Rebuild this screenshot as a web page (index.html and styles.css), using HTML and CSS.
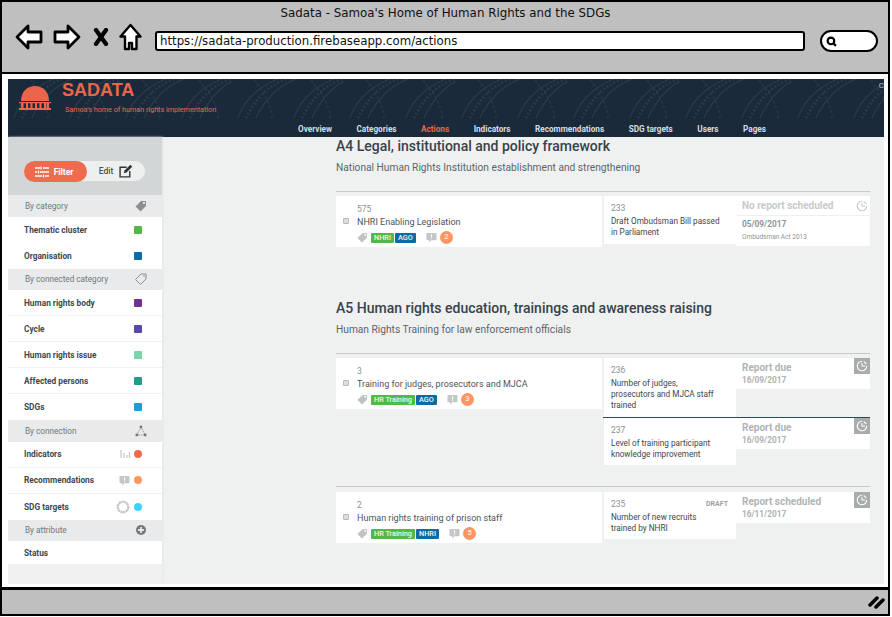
FILE: index.html
```html
<!DOCTYPE html>
<html lang="en">
<head>
    <meta charset="UTF-8">
    <meta name="viewport" content="width=device-width, initial-scale=1.0">
    <title>Sadata - Samoa's Home of Human Rights and the SDGs</title>
    <link rel="stylesheet" href="styles.css">
</head>
<body>
    <svg class="icon-defs" width="0" height="0">
        <symbol id="i-tag" viewBox="0 0 12 12"><path d="M6 1h5v5l-5.500 5.500L.5 6.500z" fill="currentColor"/><circle cx="9" cy="3" r="1" fill="#fff"/></symbol>
        <symbol id="i-tag-line" viewBox="0 0 12 12"><path d="M6 1h5v5l-5.500 5.500L.5 6.500z" fill="none" stroke="currentColor"/><circle cx="9" cy="3" r=".8" fill="currentColor"/></symbol>
        <symbol id="i-comment" viewBox="0 0 12 12"><path d="M1.500 1h9a1 1 0 0 1 1 1v6a1 1 0 0 1-1 1H6l-2.500 2.500V9h-2a1 1 0 0 1-1-1V2a1 1 0 0 1 1-1z" fill="currentColor"/><path d="M6 2.500v3.500M6 6.800v1" stroke="#fff" stroke-width="1.200"/></symbol>
        <symbol id="i-clock" viewBox="0 0 14 14"><path d="M7 1.500A5.500 5.500 0 1 0 12.500 7" fill="none" stroke="currentColor" stroke-width="1.300"/><path d="M7 3.500V7h3.500M9 1.700l3.200 3.200" fill="none" stroke="currentColor" stroke-width="1.200"/></symbol>
    </svg>

    <div class="window">
        <header class="chrome">
            <div class="chrome-title">Sadata - Samoa's Home of Human Rights and the SDGs</div>
            <div class="chrome-tools">
                <svg class="tool tool-arrow" viewBox="0 0 28 26"><path d="M13 2L2 13l11 11v-6h13V8H13z" fill="#fff" stroke="#000" stroke-width="2.800" stroke-linejoin="round"/></svg>
                <svg class="tool tool-arrow" viewBox="0 0 28 26"><path d="M15 2l11 11-11 11v-6H2V8h13z" fill="#fff" stroke="#000" stroke-width="2.800" stroke-linejoin="round"/></svg>
                <svg class="tool tool-x" viewBox="0 0 16 18"><path d="M3 2l10 14M13 2L3 16" stroke="#000" stroke-width="4.200" stroke-linecap="round"/></svg>
                <svg class="tool tool-home" viewBox="0 0 23 28"><path d="M11.500 2L1.500 13.500H6V26h4v-6h3v6h4.500V13.500H21.500z" fill="#fff" stroke="#000" stroke-width="2.400" stroke-linejoin="round"/></svg>
                <div class="url-box">https://sadata-production.firebaseapp.com/actions</div>
                <div class="search-box">
                    <svg class="search-glass" viewBox="0 0 10 10"><circle cx="4.500" cy="4.500" r="3" fill="none" stroke="#000" stroke-width="2"/><path d="M6.500 6.500L9 9" stroke="#000" stroke-width="2"/></svg>
                </div>
            </div>
        </header>

        <div class="viewport">
            <div class="app">
                <div class="app-header">
                    <div class="banner">
                        <svg class="banner-pattern" width="100%" height="100%">
                            <defs>
                                <pattern id="tatau" width="112" height="39" patternUnits="userSpaceOnUse">
                                    <path d="M6 39C12 22 26 8 46 0M24 39C32 22 44 8 64 0M62 39C68 22 82 8 102 0M80 39C88 22 100 8 112 2" fill="none" stroke="#2a3a4c" stroke-width="1.200"/>
                                    <path d="M14 39C22 22 34 8 54 0M70 39C78 22 90 8 110 0" fill="none" stroke="#2d3d50" stroke-width="2.500" stroke-dasharray="1.500 2.500"/>
                                    <path d="M40 39C40 26 30 12 22 0M98 39C98 26 88 12 78 0" fill="none" stroke="#263648" stroke-width="1.500" stroke-dasharray="3 2"/>
                                </pattern>
                            </defs>
                            <rect width="100%" height="100%" fill="url(#tatau)"/>
                        </svg>
                        <svg class="logo-mark" viewBox="0 0 32 26">
                            <path d="M2 16C2 6 9 1 16 1s14 5 14 15z" fill="#e8674c"/>
                            <path d="M0 17h32v1.200H0zM2 18h2.500v5H2zM7 18h2v5H7zM11.500 18h2v5h-2zM16 18h2v5h-2zM20.500 18h2v5h-2zM25 18h2v5h-2zM27.500 18H30v5h-2.500zM0 23h32v2H0z" fill="#e8674c"/>
                        </svg>
                        <div class="brand">
                            <div class="brand-name">SADATA</div>
                            <div class="brand-tag">Samoa's home of human rights implementation</div>
                        </div>
                        <span class="banner-cut">C</span>
                    </div>
                    <nav class="app-nav">
                        <a>Overview</a>
                        <a>Categories</a>
                        <a class="active">Actions</a>
                        <a>Indicators</a>
                        <a>Recommendations</a>
                        <a>SDG targets</a>
                        <a>Users</a>
                        <a>Pages</a>
                    </nav>
                </div>

                <div class="app-body">
                    <aside class="sidebar">
                        <div class="sidebar-top">
                            <div class="toggle">
                                <div class="toggle-on">
                                    <svg class="toggle-icon" viewBox="0 0 14 12"><path d="M0 2h5M8 2h6M0 6h2M5 6h9M0 10h7M10 10h4" stroke="#fff" stroke-width="1.300"/><path d="M6 .5v3M3.500 4.500v3M8.500 8.500v3" stroke="#fff" stroke-width="1.300"/></svg>
                                    Filter
                                </div>
                                <div class="toggle-off">
                                    Edit
                                    <svg class="edit-icon" viewBox="0 0 13 13"><path d="M10 6.500V12H1V3h6" fill="none" stroke="#333" stroke-width="1.300"/><path d="M4.500 8.500l.6-2.400L10.500.8l1.800 1.800L7 8z" fill="#333"/></svg>
                                </div>
                            </div>
                        </div>

                        <div class="side-head">By category <svg class="side-icon"><use href="#i-tag"/></svg></div>
                        <div class="side-row no-line">Thematic cluster <i class="swatch c-green"></i></div>
                        <div class="side-row no-line">Organisation <i class="swatch c-blue"></i></div>

                        <div class="side-head">By connected category <svg class="side-icon"><use href="#i-tag-line"/></svg></div>
                        <div class="side-row">Human rights body <i class="swatch c-purple"></i></div>
                        <div class="side-row">Cycle <i class="swatch c-indigo"></i></div>
                        <div class="side-row">Human rights issue <i class="swatch c-mint"></i></div>
                        <div class="side-row">Affected persons <i class="swatch c-teal"></i></div>
                        <div class="side-row no-line">SDGs <i class="swatch c-sky"></i></div>

                        <div class="side-head">By connection
                            <svg class="side-icon" viewBox="0 0 12 12"><path d="M6 2L2 10h8z" fill="none" stroke="#777" stroke-width=".8" stroke-dasharray="1.500 1"/><circle cx="6" cy="2" r="1.400" fill="#777"/><circle cx="1.800" cy="10" r="1.400" fill="#777"/><circle cx="10.200" cy="10" r="1.400" fill="#777"/></svg>
                        </div>
                        <div class="side-row">Indicators
                            <span class="side-extra">
                                <svg class="extra-icon" viewBox="0 0 10 10"><path d="M1 1v8M4 4v5M7 6v3M9.500 3v6" stroke="#c3c7c8" stroke-width="1.200"/></svg>
                                <i class="swatch round c-orange"></i>
                            </span>
                        </div>
                        <div class="side-row">Recommendations
                            <span class="side-extra">
                                <svg class="extra-icon comment-grey"><use href="#i-comment"/></svg>
                                <i class="swatch round c-peach"></i>
                            </span>
                        </div>
                        <div class="side-row no-line">SDG targets
                            <span class="side-extra">
                                <svg class="extra-icon ring" viewBox="0 0 12 12"><circle cx="6" cy="6" r="4.500" fill="none" stroke="#c3c7c8" stroke-width="2" stroke-dasharray="2 .4"/></svg>
                                <i class="swatch round c-cyan"></i>
                            </span>
                        </div>

                        <div class="side-head">By attribute
                            <svg class="side-icon" viewBox="0 0 12 12"><circle cx="6" cy="6" r="5" fill="#777"/><path d="M3 6h6M6 3v6" stroke="#fff" stroke-width="1.400"/></svg>
                        </div>
                        <div class="side-row no-line last">Status</div>
                    </aside>

                    <main class="content">
                        <section class="block">
                            <h2>A4 Legal, institutional and policy framework</h2>
                            <p class="block-sub">National Human Rights Institution establishment and strengthening</p>
                            <div class="action">
                                <div class="action-main">
                                    <i class="check"></i>
                                    <div class="action-id">575</div>
                                    <div class="action-title">NHRI Enabling Legislation</div>
                                    <div class="action-meta">
                                        <svg class="meta-tag"><use href="#i-tag"/></svg>
                                        <span class="tag tag-green">NHRI</span><span class="tag tag-blue">AGO</span>
                                        <svg class="meta-comment"><use href="#i-comment"/></svg>
                                        <span class="count">2</span>
                                    </div>
                                </div>
                                <div class="action-side">
                                    <div class="ind">
                                        <div class="ind-body h-233">
                                            <div class="ind-id">233</div>
                                            <div class="ind-text">Draft Ombudsman Bill passed in Parliament</div>
                                        </div>
                                        <div class="ind-report report-none">
                                            <div class="report-head">
                                                <span class="report-title">No report scheduled</span>
                                                <svg class="clock-plain"><use href="#i-clock"/></svg>
                                            </div>
                                            <div class="report-extra">
                                                <div class="report-date">05/09/2017</div>
                                                <div class="report-note">Ombudsman Act 2013</div>
                                            </div>
                                        </div>
                                    </div>
                                </div>
                            </div>
                        </section>

                        <section class="block block-a5">
                            <h2>A5 Human rights education, trainings and awareness raising</h2>
                            <p class="block-sub">Human Rights Training for law enforcement officials</p>
                            <div class="action">
                                <div class="action-main">
                                    <i class="check"></i>
                                    <div class="action-id">3</div>
                                    <div class="action-title">Training for judges, prosecutors and MJCA</div>
                                    <div class="action-meta">
                                        <svg class="meta-tag"><use href="#i-tag"/></svg>
                                        <span class="tag tag-green">HR Training</span><span class="tag tag-blue">AGO</span>
                                        <svg class="meta-comment"><use href="#i-comment"/></svg>
                                        <span class="count">3</span>
                                    </div>
                                </div>
                                <div class="action-side">
                                    <div class="ind">
                                        <div class="ind-body h-236">
                                            <div class="ind-id">236</div>
                                            <div class="ind-text">Number of judges, prosecutors and MJCA staff trained</div>
                                        </div>
                                        <div class="ind-report">
                                            <div class="report-title">Report due</div>
                                            <div class="report-date">16/09/2017</div>
                                            <span class="clock-box"><svg><use href="#i-clock"/></svg></span>
                                        </div>
                                    </div>
                                    <div class="ind ind-next">
                                        <div class="ind-body h-237">
                                            <div class="ind-id">237</div>
                                            <div class="ind-text">Level of training participant knowledge improvement</div>
                                        </div>
                                        <div class="ind-report">
                                            <div class="report-title">Report due</div>
                                            <div class="report-date">16/09/2017</div>
                                            <span class="clock-box"><svg><use href="#i-clock"/></svg></span>
                                        </div>
                                    </div>
                                </div>
                            </div>
                            <div class="action action-next">
                                <div class="action-main">
                                    <i class="check"></i>
                                    <div class="action-id">2</div>
                                    <div class="action-title">Human rights training of prison staff</div>
                                    <div class="action-meta">
                                        <svg class="meta-tag"><use href="#i-tag"/></svg>
                                        <span class="tag tag-green">HR Training</span><span class="tag tag-blue">NHRI</span>
                                        <svg class="meta-comment"><use href="#i-comment"/></svg>
                                        <span class="count">5</span>
                                    </div>
                                </div>
                                <div class="action-side">
                                    <div class="ind">
                                        <div class="ind-body h-235">
                                            <div class="ind-id">235 <span class="draft">DRAFT</span></div>
                                            <div class="ind-text">Number of new recruits trained by NHRI</div>
                                        </div>
                                        <div class="ind-report">
                                            <div class="report-title">Report scheduled</div>
                                            <div class="report-date">16/11/2017</div>
                                            <span class="clock-box"><svg><use href="#i-clock"/></svg></span>
                                        </div>
                                    </div>
                                </div>
                            </div>
                        </section>
                    </main>
                </div>
            </div>
        </div>

        <footer class="statusbar">
            <svg class="resize-grip" viewBox="0 0 18 14"><path d="M2 10L9 3M8 12l7-7" stroke="#000" stroke-width="3.500" stroke-linecap="round"/></svg>
        </footer>
    </div>
</body>
</html>
```

FILE: styles.css
```css
* {
    box-sizing: border-box;
}

body {
    margin: 0;
    background-color: #fff;
    font-family: Roboto, "Liberation Sans", sans-serif;
}

.icon-defs {
    position: absolute;
}

.window {
    width: 890px;
    height: 616px;
    display: flex;
    flex-direction: column;
    border: 2px solid #000;
    background-color: #fff;
}

/* browser chrome, sketch style */
.chrome {
    height: 72px;
    flex: none;
    background-color: #bfbfbf;
    border-bottom: 2px solid #000;
}

.chrome-title {
    height: 21px;
    padding: 4px 0 0 1px;
    text-align: center;
    font-family: "DejaVu Sans", sans-serif;
    font-size: 11.850px;
    line-height: 15px;
    color: #111;
}

.chrome-tools {
    display: flex;
    align-items: center;
    height: 27px;
    padding-left: 13px;
}

.tool {
    flex: none;
    display: block;
}

.tool-arrow {
    width: 28px;
    height: 26px;
    margin-right: 10px;
}

.tool-x {
    width: 16px;
    height: 18px;
    margin: 0 10px 0 2px;
}

.tool-home {
    width: 23px;
    height: 28px;
    margin-right: 13px;
}

.url-box {
    width: 650px;
    height: 20px;
    padding-left: 3px;
    margin-top: 8px;
    background-color: #fff;
    border: 2px solid #000;
    border-radius: 3px;
    font-family: "DejaVu Sans", sans-serif;
    font-size: 11.750px;
    line-height: 16px;
    color: #111;
}

.search-box {
    width: 58px;
    height: 22px;
    margin: 8px 0 0 15px;
    padding: 4px 0 0 4px;
    background-color: #fff;
    border: 2px solid #000;
    border-radius: 11px;
}

.search-glass {
    display: block;
    width: 11px;
    height: 11px;
}

.viewport {
    flex: 1;
    min-height: 0;
    padding: 5px 4px 3px 6px;
}

.app {
    height: 100%;
    display: flex;
    flex-direction: column;
    background-color: #eff1f1;
    overflow: hidden;
}

.app-header {
    flex: none;
    background-color: #1b2a3b;
}

.banner {
    position: relative;
    height: 39px;
    display: flex;
    padding-left: 11px;
    overflow: hidden;
}

.banner-pattern {
    position: absolute;
    top: 0;
    left: 0;
}

.logo-mark {
    position: relative;
    width: 32px;
    height: 26px;
    margin-top: 6px;
    flex: none;
}

.brand {
    position: relative;
    margin-left: 11px;
}

.brand-name {
    margin-top: 2px;
    font-family: "Liberation Sans", sans-serif;
    font-size: 18px;
    font-weight: 700;
    line-height: 19px;
    color: #e8674c;
}

.brand-tag {
    margin: 5px 0 0 3px;
    font-size: 7.200px;
    line-height: 10px;
    color: #e8674c;
}

.banner-cut {
    position: absolute;
    top: 2px;
    right: 0;
    font-size: 8px;
    color: #a9c4d6;
}

.app-nav {
    height: 19px;
    display: flex;
    gap: 24.500px;
    padding-left: 290px;
    font-size: 8.200px;
    font-weight: 700;
    line-height: 22px;
    color: #d5dde3;
}

.app-nav .active {
    color: #e8674c;
}

.app-body {
    flex: 1;
    min-height: 0;
    display: flex;
}

/* filter column */
.sidebar {
    width: 154px;
    flex: none;
    box-shadow: 1px 0 2px #e4e6e6;
}

.sidebar-top {
    height: 58px;
    padding: 24px 0 0 16px;
    background-color: #d3d6d7;
}

.toggle {
    width: 121px;
    height: 20px;
    display: flex;
    background-color: #eef0f0;
    border-radius: 10px;
    font-size: 8.500px;
    line-height: 20px;
}

.toggle-on {
    width: 63px;
    height: 21px;
    display: flex;
    align-items: center;
    justify-content: center;
    gap: 5px;
    padding-right: 3px;
    background-color: #ee6c4d;
    border-radius: 11px;
    font-weight: 700;
    color: #fff;
}

.toggle-icon {
    width: 14px;
    height: 12px;
}

.toggle-off {
    flex: 1;
    display: flex;
    align-items: center;
    justify-content: center;
    gap: 6px;
    font-weight: 500;
    color: #4a5359;
}

.edit-icon {
    width: 14px;
    height: 14px;
}

.side-head {
    height: 21.500px;
    display: flex;
    align-items: center;
    justify-content: space-between;
    padding: 0 15px 0 17px;
    background-color: #e8eaec;
    font-size: 8.200px;
    color: #6e7880;
}

.side-icon {
    width: 12px;
    height: 12px;
    color: #8a8f92;
}

.side-row {
    height: 26px;
    display: flex;
    align-items: center;
    justify-content: space-between;
    padding: 0 20px 0 16px;
    background-color: #fff;
    border-bottom: 1px solid #f0f2f2;
    font-size: 8.300px;
    font-weight: 700;
    color: #3c4850;
}

.side-row.no-line {
    border-bottom: none;
}

.side-row.last {
    height: 23px;
}

.side-extra {
    display: flex;
    align-items: center;
    gap: 4px;
}

.extra-icon {
    width: 10px;
    height: 10px;
}

.comment-grey {
    width: 11px;
    height: 11px;
    color: #c3c7c8;
}

.ring {
    width: 14px;
    height: 14px;
}

.swatch {
    width: 8px;
    height: 8px;
    border-radius: 1px;
    flex: none;
}

.swatch.round {
    border-radius: 50%;
}

.c-green { background-color: #52b848; }
.c-blue { background-color: #0b6aa8; }
.c-purple { background-color: #752f8e; }
.c-indigo { background-color: #5a46ae; }
.c-mint { background-color: #75d8a8; }
.c-teal { background-color: #259a8a; }
.c-sky { background-color: #1a9ed9; }
.c-orange { background-color: #ee6c4d; }
.c-peach { background-color: #ff9563; }
.c-cyan { background-color: #3cd2fb; }

/* actions list */
.content {
    flex: 1;
    min-width: 0;
    padding-left: 174px;
    padding-right: 14px;
}

.block h2 {
    margin: 0;
    font-size: 14px;
    font-weight: 500;
    line-height: 18px;
    color: #37424a;
}

.block-a5 {
    margin-top: 52px;
}

.block-sub {
    margin: 6px 0 0;
    font-size: 10.200px;
    line-height: 13px;
    color: #5a656c;
}

.action {
    display: flex;
    gap: 2px;
    margin-top: 17px;
    padding-top: 4px;
    border-top: 1px solid #c6caca;
    align-items: flex-start;
}

.action-next {
    margin-top: 21px;
    padding-top: 5px;
}

.action-main {
    position: relative;
    width: 266px;
    height: 51px;
    flex: none;
    padding: 8px 0 0 21px;
    background-color: #fff;
}

.check {
    position: absolute;
    left: 7px;
    top: 22px;
    width: 6px;
    height: 6px;
    background-color: #dcdfe0;
    border: 1px solid #b4b9bb;
    border-radius: 1px;
}

.action-id {
    font-size: 8.500px;
    line-height: 10px;
    color: #8b9195;
}

.action-title {
    margin-top: 2px;
    font-size: 9px;
    line-height: 12px;
    color: #4b555b;
}

.action-meta {
    display: flex;
    align-items: center;
    margin-top: 3px;
}

.meta-tag {
    width: 11px;
    height: 11px;
    margin-right: 3px;
    color: #bfc3c4;
}

.tag {
    height: 10px;
    padding: 0 3px;
    border-radius: 1px;
    font-size: 7.300px;
    font-weight: 500;
    line-height: 10px;
    color: #eafbe6;
}

.tag-green {
    background-color: #52b848;
    margin-right: 1px;
}

.tag-blue {
    background-color: #0b6aa8;
}

.meta-comment {
    width: 11px;
    height: 11px;
    margin-left: 10px;
    color: #c3c7c8;
}

.count {
    width: 13px;
    height: 13px;
    margin-left: 3px;
    background-color: #ff9563;
    border-radius: 50%;
    font-size: 7.500px;
    line-height: 12px;
    text-align: center;
    color: #fff;
}

.action-side {
    width: 266px;
    flex: none;
}

.ind {
    display: flex;
    align-items: flex-start;
}

.ind-next {
    border-top: 1px solid #2f4a52;
    margin-left: -1px;
    padding-left: 1px;
}

.ind-body {
    width: 132px;
    flex: none;
    padding: 7px 14px 0 7px;
    background-color: #fff;
}

.h-233 { height: 48px; }
.h-236 { height: 59px; }
.h-237 { height: 47px; }
.h-235 { height: 47px; }

.ind-id {
    display: flex;
    justify-content: space-between;
    font-size: 8.500px;
    line-height: 10px;
    color: #8b9195;
    margin-right: -6px;
}

.draft {
    font-size: 7px;
    font-weight: 700;
    color: #9a9fa2;
}

.ind-text {
    margin-top: 3px;
    font-size: 8.200px;
    line-height: 11px;
    color: #3c464c;
}

.ind-report {
    position: relative;
    width: 134px;
    height: 31px;
    flex: none;
    padding: 4px 0 0 6px;
    background-color: #fff;
}

.report-none {
    height: 49px;
    padding: 0;
    background-color: transparent;
}

.report-head {
    height: 19px;
    display: flex;
    align-items: center;
    justify-content: space-between;
    padding: 1px 2px 0 6px;
    background-color: #fff;
    color: #c6cacb;
}

.report-none .report-title {
    color: #c6cacb;
}

.report-extra {
    height: 30px;
    margin-top: 1px;
    padding: 2px 0 0 6px;
    background-color: #fff;
}

.report-title {
    font-size: 10px;
    font-weight: 700;
    line-height: 12px;
    color: #b0b4b5;
}

.report-date {
    margin-top: 1px;
    font-size: 8.300px;
    font-weight: 700;
    line-height: 11px;
    color: #aeb2b3;
}

.report-none .report-date {
    color: #8e9496;
}

.report-note {
    margin-top: 3px;
    font-size: 6.500px;
    line-height: 8px;
    color: #8e9496;
}

.clock-plain {
    width: 12px;
    height: 12px;
}

.clock-box {
    position: absolute;
    top: 0;
    right: 0;
    width: 16px;
    height: 16px;
    padding: 2px;
    background-color: #a8acad;
    color: #fff;
}

.clock-box svg {
    display: block;
    width: 12px;
    height: 12px;
}

.statusbar {
    height: 27px;
    flex: none;
    display: flex;
    justify-content: flex-end;
    align-items: center;
    padding-right: 2px;
    background-color: #bfbfbf;
    border-top: 3px solid #000;
}

.resize-grip {
    width: 18px;
    height: 14px;
}
```
